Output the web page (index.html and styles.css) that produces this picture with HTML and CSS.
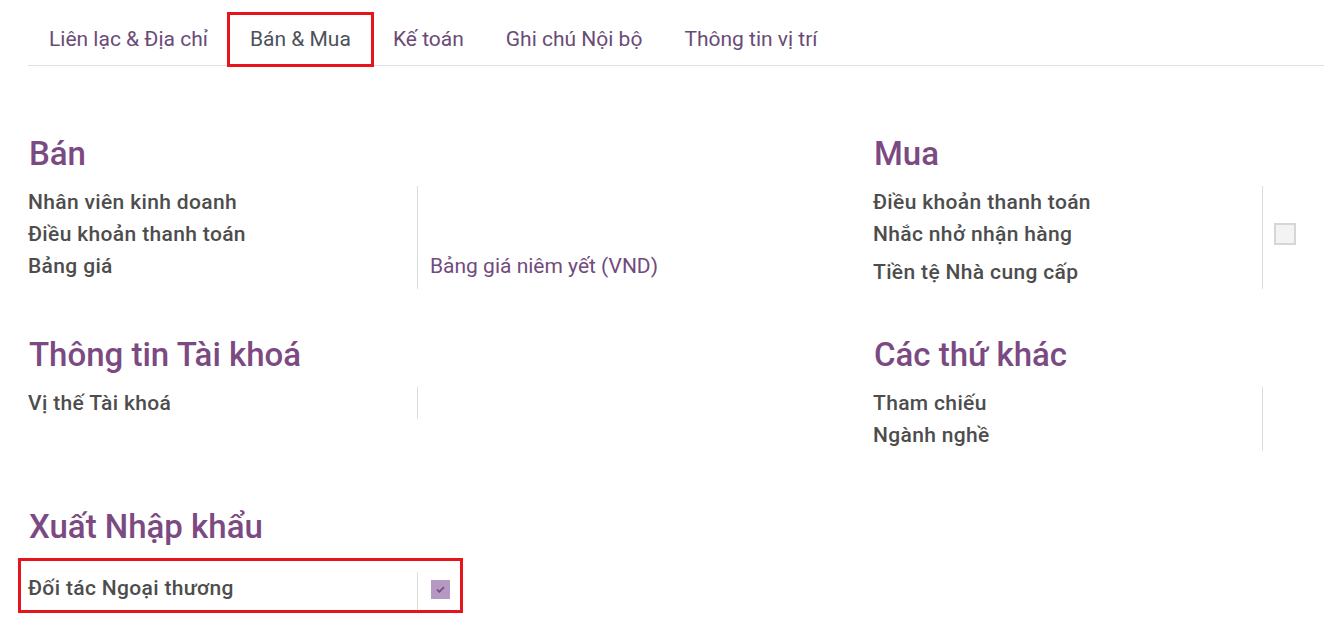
FILE: index.html
```html
<!DOCTYPE html>
<html lang="vi">
<head>
    <meta charset="UTF-8">
    <meta name="viewport" content="width=device-width, initial-scale=1.0">
    <title>Bán &amp; Mua</title>
    <link rel="stylesheet" href="styles.css">
</head>
<body>
    <ul class="tabs">
        <li class="tab">Liên lạc &amp; Địa chỉ</li>
        <li class="tab active">Bán &amp; Mua</li>
        <li class="tab">Kế toán</li>
        <li class="tab">Ghi chú Nội bộ</li>
        <li class="tab">Thông tin vị trí</li>
    </ul>

    <div class="groups">
        <div class="group">
            <h2 class="group-title">Bán</h2>
            <div class="fields">
                <div class="field"><span class="label">Nhân viên kinh doanh</span><span class="value"></span></div>
                <div class="field"><span class="label">Điều khoản thanh toán</span><span class="value"></span></div>
                <div class="field field-input"><span class="label">Bảng giá</span><span class="value link">Bảng giá niêm yết (VND)</span></div>
            </div>
        </div>

        <div class="group">
            <h2 class="group-title">Mua</h2>
            <div class="fields">
                <div class="field"><span class="label">Điều khoản thanh toán</span><span class="value"></span></div>
                <div class="field field-check"><span class="label">Nhắc nhở nhận hàng</span><span class="value"><span class="checkbox"></span></span></div>
                <div class="field field-last"><span class="label">Tiền tệ Nhà cung cấp</span><span class="value"></span></div>
            </div>
        </div>

        <div class="group">
            <h2 class="group-title">Thông tin Tài khoá</h2>
            <div class="fields">
                <div class="field"><span class="label">Vị thế Tài khoá</span><span class="value"></span></div>
            </div>
        </div>

        <div class="group">
            <h2 class="group-title">Các thứ khác</h2>
            <div class="fields">
                <div class="field"><span class="label">Tham chiếu</span><span class="value"></span></div>
                <div class="field"><span class="label">Ngành nghề</span><span class="value"></span></div>
            </div>
        </div>
    </div>

    <div class="group group-single">
        <h2 class="group-title">Xuất Nhập khẩu</h2>
        <div class="marked">
            <div class="field field-trade"><span class="label">Đối tác Ngoại thương</span><span class="value"><span class="checkbox checked">
                <svg width="9" height="7" viewBox="0 0 9 7"><path d="M1 3.6 L3.4 5.8 L8 1.2" fill="none" stroke="#7a4a84" stroke-width="1.8"/></svg>
            </span></span></div>
        </div>
    </div>
</body>
</html>
```

FILE: styles.css
```css
body {
    margin: 0;
    padding: 0 0 20px;
    background: #fff;
    font-family: Roboto, "Noto Sans", sans-serif;
    color: #4a4a4a;
}

.tabs {
    list-style: none;
    margin: 0 0 0 28px;
    padding: 14px 0 0;
    display: flex;
    border-bottom: 1px solid #dee2e6;
}

.tab {
    padding: 0 21px;
    height: 51px;
    line-height: 51px;
    font-size: 21px;
    color: #6a4b77;
}

.tab.active {
    color: #4b5259;
    outline: 3px solid #e8141c;
    outline-offset: -1px;
}

.groups {
    display: grid;
    grid-template-columns: 845px 1fr;
    margin-left: 28px;
    padding-top: 70px;
    row-gap: 48px;
}

.group-title {
    margin: 0 0 14px 1px;
    font-size: 33px;
    line-height: 36px;
    font-weight: 500;
    color: #7b4a82;
}

.field {
    display: flex;
    height: 32px;
}

.label {
    width: 389px;
    flex-shrink: 0;
    line-height: 32px;
    font-size: 21px;
    font-weight: 500;
    letter-spacing: 0.35px;
    color: #4d4d4d;
    border-right: 1px solid #dcdcdc;
}

.value {
    padding-left: 12px;
    line-height: 32px;
    font-size: 21px;
}

.link {
    color: #714b7c;
}

.field-input {
    height: 39px;
}

.field-check {
    height: 38px;
}

.field-check .value {
    padding-left: 11px;
}

.field-last {
    height: 33px;
}

.field-last .label {
    line-height: 33px;
}

.checkbox {
    display: inline-block;
    box-sizing: border-box;
    width: 22px;
    height: 22px;
    margin-top: 5px;
    background: #f3f3f3;
    border: 2px solid #d6d6d6;
    vertical-align: top;
}

.group-single {
    margin: 58px 0 0 28px;
}

.group-single .group-title {
    margin-bottom: 0;
}

.marked {
    box-sizing: border-box;
    width: 445px;
    margin: 13px 0 0 -10px;
    padding: 11px 0 0 7px;
    border: 3px solid #e8141c;
}

.field-trade {
    height: 38px;
}

.field-trade .value {
    padding-left: 13px;
}

.checkbox.checked {
    width: 19px;
    height: 19px;
    margin-top: 8px;
    border: none;
    background: #b699c1;
    display: inline-flex;
    align-items: center;
    justify-content: center;
}
```
